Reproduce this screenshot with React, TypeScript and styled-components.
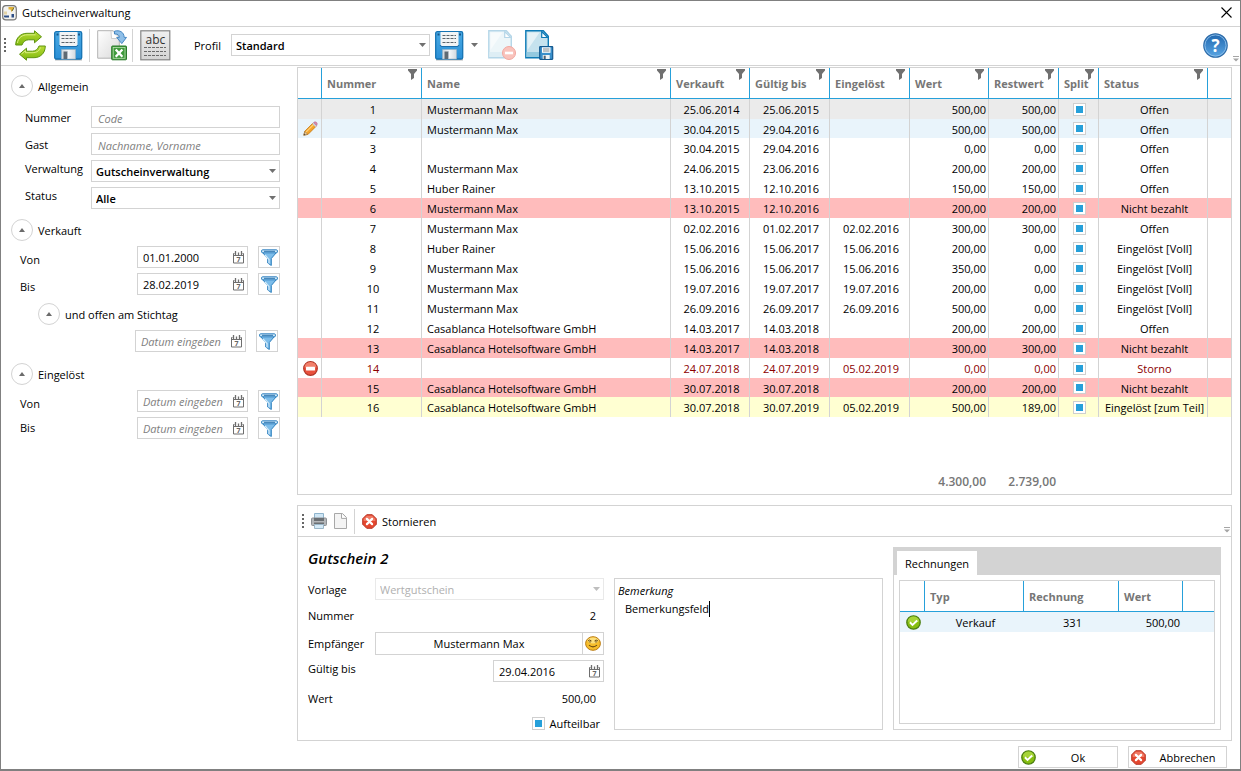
import React from 'react';
import styled, { createGlobalStyle, css } from 'styled-components';

const line = '#d3d3d3';
const accent = '#26a0da';
const muted = '#767676';

const GlobalStyle = createGlobalStyle`
  *, *::before, *::after { box-sizing: border-box; }
  body { margin: 0; background: #fff; }
  body, button, input, select, textarea {
    font-family: "Open Sans", "Noto Sans", sans-serif;
    font-size: 11px;
    line-height: 16px;
    color: #000;
  }
  button, input, select, textarea { margin: 0; border-radius: 0; }
  svg { display: block; flex: none; }
`;

/* ---------- window ---------- */

const Window = styled.div`
  min-height: 100vh;
  display: flex;
  flex-direction: column;
  border: 1px solid #808080;
  border-bottom-width: 2px;
  background: #fff;
`;

const TitleBar = styled.header`
  display: flex;
  align-items: center;
  gap: 5px;
  height: 26px;
  padding: 0 8px 2px 1px;
  border-bottom: 1px solid ${line};
`;

const Title = styled.h1`
  flex: 1;
  margin: 0;
  font-size: 11px;
  font-weight: 400;
`;

const PlainButton = styled.button`
  display: flex;
  align-items: center;
  gap: 5px;
  padding: 0;
  border: 0;
  background: none;
  cursor: pointer;
`;

const Toolbar = styled.div`
  position: relative;
  display: flex;
  align-items: center;
  height: 39px;
  padding: 0 12px 2px 3px;
  border-bottom: 1px solid ${line};
`;

const ToolGroup = styled.div<{ $gap: number; $left?: number }>`
  display: flex;
  align-items: center;
  gap: ${(p) => p.$gap}px;
  margin-left: ${(p) => p.$left ?? 0}px;
  label { padding-top: 2px; }
`;

const Divider = styled.span<{ $height: number }>`
  width: 1px;
  height: ${(p) => p.$height}px;
  background: ${line};
`;

const Grow = styled.span`
  flex: 1;
`;

const Overflow = styled.span`
  position: absolute;
  right: 1px;
  bottom: 3px;
`;

const Content = styled.div`
  flex: 1;
  display: flex;
`;

/* ---------- form controls ---------- */

const boxed = css`
  height: 22px;
  border: 1px solid ${line};
  background: #fff;
`;

const TextInput = styled.input`
  ${boxed}
  flex: 1;
  min-width: 0;
  padding: 2px 6px 0;
  outline: none;
  &::placeholder { color: #808080; font-style: italic; opacity: 1; }
`;

const SelectBox = styled.span<{ $width?: number; $faded?: boolean }>`
  position: relative;
  display: flex;
  flex: ${(p) => (p.$width ? `0 0 ${p.$width}px` : '1')};
  min-width: 0;
  svg { position: absolute; right: 4px; top: 9px; pointer-events: none; }
  select {
    ${boxed}
    width: 100%;
    padding: 2px 16px 0 4px;
    appearance: none;
    font-weight: 600;
    color: #000;
    opacity: 1;
  }
  ${(p) => p.$faded && css`
    select { border-color: #e9e9e9; color: #b0b0b0; font-weight: 400; }
    svg { opacity: 0.45; }
  `}
`;

const DateBox = styled.span`
  ${boxed}
  display: flex;
  align-items: center;
  flex: none;
  width: 111px;
  padding-right: 3px;
  input {
    flex: 1;
    min-width: 0;
    padding: 1px 0 0 5px;
    border: 0;
    background: none;
    outline: none;
  }
  input::placeholder { color: #808080; font-style: italic; opacity: 1; }
`;

const FilterButton = styled.button`
  ${boxed}
  display: grid;
  place-items: center;
  flex: 0 0 22px;
  padding: 0;
`;

const CheckBox = styled.input`
  display: block;
  flex: none;
  width: 13px;
  height: 13px;
  appearance: none;
  border: 1px solid #cfcfcf;
  background: #fff;
  &:checked {
    background: linear-gradient(${accent}, ${accent}) center / 7px 7px no-repeat #fff;
  }
`;

/* ---------- sidebar ---------- */

const Sidebar = styled.aside`
  flex: 0 0 296px;
  display: flex;
  flex-direction: column;
  gap: 10px;
  padding: 9px 17px 10px 0;
`;

const Section = styled.section`
  display: flex;
  flex-direction: column;
  gap: 5px;
`;

const SectionHead = styled.div<{ $indent: number; $before?: number; $after?: number }>`
  display: flex;
  align-items: center;
  gap: 5px;
  margin: ${(p) => p.$before ?? 0}px 0 ${(p) => p.$after ?? 0}px;
  padding-left: ${(p) => p.$indent}px;
`;

const SectionTitle = styled.h2`
  margin: 0;
  padding-top: 2px;
  font-size: 11px;
  font-weight: 400;
`;

const Collapse = styled.button`
  display: grid;
  place-items: center;
  width: 22px;
  height: 22px;
  padding: 0;
  border: 1px solid ${line};
  border-radius: 50%;
  background: #fff;
`;

type Align = 'flex-start' | 'center' | 'flex-end';

const Field = styled.div<{ $align: Align }>`
  display: flex;
  padding-left: 24px;
  label {
    flex: 0 0 66px;
    align-self: ${(p) => p.$align};
    padding-top: ${(p) => (p.$align === 'center' ? 2 : 1)}px;
  }
`;

const DateField = styled.div<{ $align?: Align; $inset?: boolean }>`
  display: flex;
  justify-content: flex-end;
  gap: 10px;
  padding: 0 ${(p) => (p.$inset ? 2 : 0)}px ${(p) => (p.$inset ? 1 : 0)}px 19px;
  label {
    flex: 1;
    align-self: ${(p) => p.$align ?? 'center'};
  }
`;

/* ---------- data tables ---------- */

const Main = styled.main`
  flex: 1;
  min-width: 0;
  display: flex;
  flex-direction: column;
  gap: 10px;
  padding: 1px 8px 0 0;
`;

const Panel = styled.section<{ $grow?: boolean }>`
  flex: ${(p) => (p.$grow ? '1 0 auto' : 'none')};
  border: 1px solid ${line};
`;

const DataTable = styled.table<{ $ruled?: boolean }>`
  width: 100%;
  table-layout: fixed;
  border-collapse: separate;
  border-spacing: 0;
  th {
    position: relative;
    height: 31px;
    padding: 2px 0 0 5px;
    border-bottom: 1px solid ${accent};
    text-align: left;
    font-weight: 700;
    color: ${muted};
    white-space: nowrap;
  }
  th + th { border-left: 1px solid ${accent}; }
  td {
    height: 20px;
    padding: 1px 0 0;
    line-height: 17px;
    white-space: nowrap;
    border-left: 1px solid ${(p) => (p.$ruled ? line : 'transparent')};
  }
  td:first-child { border-left: 0; }
  tbody tr:nth-child(13n + 2) td { height: ${(p) => (p.$ruled ? 19 : 20)}px; }
  tfoot td {
    height: 77px;
    padding-bottom: 4px;
    vertical-align: bottom;
    border: 0;
    font-size: 12px;
    font-weight: 600;
    color: ${muted};
  }
`;

const tones = {
  plain: 'transparent',
  current: '#ebebeb',
  edit: '#e9f4fb',
  unpaid: '#ffbcbc',
  partial: '#ffffd2',
  storno: 'transparent',
};
type Tone = keyof typeof tones;

const Row = styled.tr<{ $tone: Tone }>`
  background: ${(p) => tones[p.$tone]};
  td { color: ${(p) => (p.$tone === 'storno' ? '#8b0000' : '#000')}; }
`;

const Cell = styled.td<{ $kind?: 'text' | 'mid' | 'num' | 'icon' }>`
  ${(p) => p.$kind === 'text' && css`&&& { padding-left: 5px; }`}
  ${(p) => p.$kind === 'mid' && css`&&& { padding-left: 3px; text-align: center; }`}
  ${(p) => p.$kind === 'num' && css`&&& { padding-right: 2px; text-align: right; }`}
  ${(p) => p.$kind === 'icon' && css`
    &&& { padding: 0 0 0 2px; }
    svg, input { margin: 0 auto; }
  `}
`;

const HeadFilter = styled.button`
  position: absolute;
  top: 1px;
  right: 4px;
  padding: 0;
  border: 0;
  background: none;
`;

/* ---------- voucher details ---------- */

const DetailBar = styled.div`
  position: relative;
  display: flex;
  align-items: center;
  height: 31px;
  padding-left: 4px;
  border-bottom: 1px solid ${line};
`;

const BarText = styled.span`
  padding-top: 2px;
`;

const DetailBody = styled.div`
  display: grid;
  grid-template-columns: 296px minmax(0, 1fr) 328px;
  grid-template-rows: 31px 152px;
  column-gap: 10px;
  padding: 10px;
`;

const DetailTitle = styled.h2`
  grid-column: 1 / 3;
  margin: 0;
  font-size: 15px;
  line-height: 22px;
  font-weight: 600;
  font-style: italic;
  color: #000;
`;

const Form = styled.form`
  display: flex;
  flex-direction: column;
`;

const FormRow = styled.div<{ $height: number; $align?: Align; $after?: number }>`
  display: flex;
  align-items: ${(p) => p.$align ?? 'center'};
  justify-content: space-between;
  height: ${(p) => p.$height}px;
  margin-bottom: ${(p) => p.$after ?? 0}px;
  label { flex: 0 0 67px; padding-top: 1px; }
  output { padding-right: 8px; }
`;

const Recipient = styled.span`
  display: flex;
  flex: 1;
  height: 23px;
  border: 1px solid ${line};
  input {
    flex: 1;
    min-width: 0;
    border: 0;
    padding: 1px 0 0;
    text-align: center;
    background: none;
  }
  button {
    display: grid;
    place-items: center;
    width: 21px;
    padding: 0;
    border: 0;
    border-left: 1px solid ${line};
    background: none;
  }
`;

const CheckLabel = styled.div`
  display: flex;
  align-items: center;
  gap: 5px;
  margin-left: auto;
  padding-right: 4px;
  label { flex: none; }
`;

const Notes = styled.div`
  display: flex;
  flex-direction: column;
  align-items: flex-start;
  padding: 3px;
  border: 1px solid ${line};
  label { font-style: italic; line-height: 18px; }
  textarea {
    field-sizing: content;
    max-width: 100%;
    margin: 1px 0 0 7px;
    padding: 0;
    border: 0;
    border-right: 1px solid #000;
    outline: none;
    resize: none;
    overflow: hidden;
    background: none;
  }
`;

const Tabs = styled.div`
  grid-column: 3;
  grid-row: 1 / 3;
  display: flex;
  flex-direction: column;
  border: 1px solid ${line};
`;

const TabList = styled.div`
  display: flex;
  align-items: flex-end;
  height: 27px;
  padding-left: 3px;
  background: ${line};
`;

const Tab = styled.button`
  height: 24px;
  padding: 2px 8px 0;
  border: 0;
  background: #fff;
`;

const TabPage = styled.div`
  flex: 1;
  margin: 5px;
  border: 1px solid ${line};
`;

const Footer = styled.footer`
  display: flex;
  justify-content: flex-end;
  gap: 10px;
  padding: 5px 13px 1px 0;
`;

const FooterButton = styled.button<{ $width: number }>`
  ${boxed}
  display: flex;
  align-items: center;
  width: ${(p) => p.$width}px;
  padding: 0 2px;
  span { flex: 1; padding: 2px 0 0 5px; text-align: center; }
`;

/* ---------- icons ---------- */

const Grip = () => (
  <svg width="3" height="15" viewBox="0 0 3 15">
    {[0, 4, 8, 12].map((y) => <rect key={y} x="0" y={y} width="2" height="2" fill="#666" />)}
  </svg>
);

const Arrow = () => (
  <svg width="7" height="4" viewBox="0 0 7 4"><path d="M0 0h7L3.5 4z" fill="#707070" /></svg>
);

const UpArrow = () => (
  <svg width="6" height="4" viewBox="0 0 6 4"><path d="M0 4h6L3 0z" fill="#6b6b6b" /></svg>
);

const OverflowIcon = () => (
  <svg width="6" height="6" viewBox="0 0 6 6"><path d="M0 0h6v1H0zM0 2.5h6L3 5.5z" fill="#a5a5a5" /></svg>
);

const AppIcon = () => (
  <svg width="15" height="16" viewBox="0 0 15 16">
    <rect x=".7" y=".7" width="13.6" height="14.2" rx="3.2" fill="#f3f3f0" stroke="#777" strokeWidth="1.2" />
    <path d="M6.500 2h5.500l-.5 2.500-2 2.500-1-2.500h-2z" fill="#e0b23a" />
    <path d="M10 6l2-3.500" stroke="#6b6f3a" strokeWidth="1" />
    <path d="M2 6.500h3v3H2z" fill="#e3d3a6" />
    <path d="M2 10.500h5v2H3q-1 0-1-1zM9.500 9h2.500v3.500H9.500z" fill="#2e4f86" />
  </svg>
);

const CloseIcon = () => (
  <svg width="11" height="11" viewBox="0 0 11 11"><path d="M.5.5l10 10M10.500.5l-10 10" stroke="#000" strokeWidth="1.1" /></svg>
);

const RefreshIcon = () => (
  <svg width="31" height="31" viewBox="0 0 31 31">
    <defs>
      <linearGradient id="leaf" x1="0" y1="0" x2="0" y2="1">
        <stop offset="0" stopColor="#b9dc36" /><stop offset="1" stopColor="#7fb80e" />
      </linearGradient>
    </defs>
    <g fill="url(#leaf)" stroke="#5f9410" strokeWidth="1" strokeLinejoin="round">
      <path d="M.7 15C.7 7.500 6 3.300 12 3.300h7.500V.8l7 6-7 6v-3h-6c-3.200 0-5.500 2.200-6.500 5.200z" />
      <path d="M30.300 16c0 7.500-5.300 11.700-11.300 11.700h-7.500v2.500l-7-6 7-6v3h6c3.200 0 5.500-2.200 6.500-5.200z" />
    </g>
    <path d="M2.500 13C3 7.500 8 4.800 12 4.800h8.500" fill="none" stroke="#d8ee80" strokeWidth="1" />
    <path d="M6.500 24l4-3.400v2.100h7.500c4 0 6.500-2 7.500-5.200" fill="none" stroke="#d8ee80" strokeWidth="1" />
  </svg>
);

const SaveIcon = () => (
  <svg width="29" height="31" viewBox="0 0 29 31">
    <defs>
      <linearGradient id="disk" x1="0" y1="0" x2="0" y2="1">
        <stop offset="0" stopColor="#4aaae4" /><stop offset="1" stopColor="#2a8fd6" />
      </linearGradient>
      <linearGradient id="metal" x1="0" y1="0" x2="1" y2="0">
        <stop offset="0" stopColor="#cfd6dc" /><stop offset=".5" stopColor="#f4f6f8" /><stop offset="1" stopColor="#d2d9df" />
      </linearGradient>
    </defs>
    <rect x="1" y="29" width="27" height="1.500" fill="#b9b9b9" />
    <rect x=".7" y="1.700" width="27" height="27.300" rx="1.500" fill="url(#disk)" stroke="#1573b3" strokeWidth="1.300" />
    <path d="M2.500 3.500h2v2h-2zM24 3.500h2v2h-2z" fill="#17568a" />
    <path d="M5.500 2h18v12.500q0 1.500-1.500 1.500H7q-1.500 0-1.500-1.500z" fill="#f2f4f5" />
    <path d="M5 15q.5 1.500 2 1.500h15q1.500 0 2-1.500" fill="none" stroke="#1a6daa" />
    <path d="M7.500 5.500H21M7.500 8.500H21M7.500 12.500H21" stroke="#5b646b" strokeWidth="1" strokeDasharray="3 1" />
    <path d="M7.500 19.500h14v9.500h-14z" fill="url(#metal)" stroke="#9eb3c2" strokeWidth=".6" />
    <rect x="9.500" y="21.500" width="4" height="7.500" fill="#5f6a73" />
    <path d="M13.500 21.500v7.500" stroke="#b4bcc4" />
  </svg>
);

const ExcelIcon = () => (
  <svg width="31" height="31" viewBox="0 0 31 31">
    <defs>
      <linearGradient id="sheet" x1="0" y1="0" x2="1" y2="1">
        <stop offset="0" stopColor="#ffffff" /><stop offset="1" stopColor="#dadada" />
      </linearGradient>
    </defs>
    <path d="M.7.7H16l6.300 6v21.500H.7z" fill="url(#sheet)" stroke="#b3b3b3" />
    <path d="M14 1l.5 7.500h7.500" fill="#fff" stroke="#c3c3c3" strokeWidth=".8" />
    <path d="M17.500 1.200c5-1.500 9.500.8 9.700 6.200H29.500l-4.700 6.200-5.100-6.200h2.600c0-2.500-1.800-3.600-4.800-3.400z" fill="#8fbfe8" stroke="#3a7fbd" strokeWidth=".9" strokeLinejoin="round" />
    <rect x="14.700" y="16" width="14.800" height="13.800" rx=".8" fill="#3f9a3c" stroke="#2a7a2b" />
    <rect x="16.200" y="17.500" width="11.800" height="10.800" fill="none" stroke="#b9dfae" strokeWidth=".8" />
    <path d="M18.700 19.500l6.700 7.200M25.400 19.500l-6.700 7.200" stroke="#fff" strokeWidth="2.300" />
  </svg>
);

const AbcIcon = () => (
  <svg width="31" height="31" viewBox="0 0 31 31">
    <defs>
      <linearGradient id="card" x1="0" y1="0" x2="0" y2="1">
        <stop offset="0" stopColor="#f0f0f0" /><stop offset="1" stopColor="#d4d4d4" />
      </linearGradient>
    </defs>
    <rect x=".8" y=".8" width="29" height="29" fill="url(#card)" stroke="#858585" strokeWidth="1.200" />
    <text x="15.500" y="14" textAnchor="middle" fontSize="12" fontFamily="Open Sans, sans-serif" fill="#333">abc</text>
    <path d="M4 17.500h22M4 21.500h22M4 25.500h22" stroke="#6a6a6a" strokeDasharray="3 1" />
  </svg>
);

const PageShape = ({ faded }: { faded?: boolean }) => (
  <g opacity={faded ? 0.3 : 1}>
    <path d="M.8.8h17.500l5 5.500v21.500H.8z" fill="#c5e2ee" stroke="#0d7ab5" strokeWidth="1.400" />
    <path d="M2.500 2.500h12L2.500 20z" fill="#fff" opacity=".55" />
    <path d="M1.500 22h21v5h-21z" fill="#93c9df" />
    <path d="M16.700 1.500v6h6z" fill="#fff" stroke="#0d7ab5" strokeWidth="1.200" />
  </g>
);

const PageDeleteIcon = () => (
  <svg width="29" height="31" viewBox="0 0 29 31">
    <PageShape faded />
    <circle cx="21" cy="23" r="6.500" fill="#f9c3bc" stroke="#f2a79f" />
    <rect x="17" y="21.700" width="8" height="2.600" fill="#fff" />
  </svg>
);

const PageSaveIcon = () => (
  <svg width="29" height="31" viewBox="0 0 29 31">
    <PageShape />
    <rect x="14.700" y="16.700" width="13" height="12.600" rx=".5" fill="#3a8fca" stroke="#14598f" strokeWidth="1.200" />
    <rect x="17" y="17.300" width="8.500" height="5.500" fill="#fff" />
    <path d="M18 19h6.500M18 21h6.500" stroke="#7b868e" />
    <rect x="17.700" y="25" width="7" height="4" fill="#eef2f5" />
    <rect x="18.700" y="25.700" width="2" height="3.300" fill="#4f6070" />
  </svg>
);

const HelpIcon = () => (
  <svg width="25" height="25" viewBox="0 0 25 25">
    <defs>
      <linearGradient id="help" x1="0" y1="0" x2="0" y2="1">
        <stop offset="0" stopColor="#1f66ae" /><stop offset="1" stopColor="#5aa6e4" />
      </linearGradient>
    </defs>
    <circle cx="12.500" cy="12.500" r="11.700" fill="url(#help)" stroke="#2d6ba8" strokeWidth="1.200" />
    <circle cx="12.500" cy="12.500" r="10.600" fill="none" stroke="#8fc0ea" strokeWidth=".9" />
    <text x="12.500" y="18.500" textAnchor="middle" fontSize="17" fontWeight="700" fontFamily="Open Sans, sans-serif" fill="#fff">?</text>
  </svg>
);

const CalendarIcon = () => (
  <svg width="11" height="13" viewBox="0 0 11 13">
    <path d="M1.500 2.500H.5v9.500h10V2.500h-1" fill="none" stroke="#6e6e6e" />
    <path d="M1 4.500h9" stroke="#6e6e6e" />
    <path d="M2.500 0v4M8.500 0v4M5.500 1.500v2.500" stroke="#6e6e6e" strokeWidth="1.300" />
    <text x="5.500" y="11" textAnchor="middle" fontSize="7" fontWeight="700" fontFamily="Open Sans, sans-serif" fill="#666">7</text>
  </svg>
);

const FunnelIcon = () => (
  <svg width="17" height="17" viewBox="0 0 17 17">
    <path d="M.7 2.500l6 7v4.500l3.600 2.500v-7l6-7z" fill="#7dbdea" stroke="#2f81bf" strokeWidth="1" strokeLinejoin="round" />
    <path d="M4 6l4 4.500v4" fill="none" stroke="#d5ecfa" strokeWidth="1.200" />
    <rect x=".6" y=".8" width="15.800" height="3" rx="1" fill="#cfe8f8" stroke="#2f81bf" />
    <path d="M3 2.300h11" stroke="#2671ad" strokeWidth="1" />
  </svg>
);

const HeadFunnel = () => (
  <svg width="9" height="11" viewBox="0 0 9 11"><path d="M0 0h9v1.500L6 5v4l-3 2V5L0 1.500z" fill="#707070" /></svg>
);

const PencilIcon = () => (
  <svg width="15" height="15" viewBox="0 0 15 15">
    <path d="M.8 14.200l1-4 8-8 3.200 3.200-8 8z" fill="#f5a32a" stroke="#c47a18" strokeWidth=".8" />
    <path d="M3 11.200l7.500-7.500" stroke="#ffd27a" strokeWidth="1.200" />
    <path d="M.8 14.200l1-3.800 2.900 2.900z" fill="#e8cba0" stroke="#8a6a3a" strokeWidth=".5" />
    <path d="M.7 14.300l.6-1.800 1.200 1.200z" fill="#444" />
    <path d="M9.300 2.700l1.200-1.200 3.200 3.200-1.200 1.200z" fill="#c8cfdc" />
    <path d="M10.500 1.500Q12 0 13.500 1.300T13.700 4.700z" fill="#d987a8" stroke="#a9688e" strokeWidth=".5" />
  </svg>
);

const StopIcon = () => (
  <svg width="15" height="15" viewBox="0 0 15 15">
    <circle cx="7.500" cy="7.500" r="6.800" fill="#e9503c" stroke="#b03324" strokeWidth="1.200" />
    <path d="M1.500 6.500a6 5.500 0 0 1 12 0z" fill="#f2806b" />
    <rect x="3" y="5.700" width="9" height="3.800" rx=".6" fill="#fff" />
  </svg>
);

const CheckIcon = () => (
  <svg width="15" height="15" viewBox="0 0 15 15">
    <circle cx="7.500" cy="7.500" r="6.700" fill="#86be10" stroke="#4c7f12" strokeWidth="1.300" />
    <path d="M1.700 6.500a5.800 5 0 0 1 11.600 0q-5.800 2-11.600 0z" fill="#a6d437" />
    <path d="M3.900 7.300l2.600 2.600 4.700-4.300" fill="none" stroke="#fff" strokeWidth="2" />
  </svg>
);

const CancelIcon = () => (
  <svg width="15" height="15" viewBox="0 0 15 15">
    <path d="M4.700.7h5.600l4 4v5.600l-4 4H4.700l-4-4V4.700z" fill="#e4472f" stroke="#b8392a" />
    <path d="M5 1.700h5l3.300 3.300v2H1.700V5z" fill="#f07a64" />
    <path d="M4.900 4.900l5.200 5.200M10.100 4.900l-5.200 5.200" stroke="#fff" strokeWidth="2.200" strokeLinecap="round" />
  </svg>
);

const PrinterIcon = () => (
  <svg width="16" height="16" viewBox="0 0 16 16">
    <path d="M3.500.5h9v6h-9z" fill="#cfe6f5" stroke="#8fb4cc" />
    <rect x=".5" y="5" width="15" height="7.500" rx="1" fill="#b4b7ba" stroke="#8c9094" />
    <path d="M3 5h10v3H3zM3 9.500h10v1.500H3z" fill="#6b7074" />
    <path d="M3.500 11.500h9v4h-9z" fill="#d5eaf7" stroke="#9ab6c8" />
  </svg>
);

const PageIcon = () => (
  <svg width="13" height="16" viewBox="0 0 13 16">
    <path d="M.5.5h8l4 4v11H.5z" fill="#f4f4f4" stroke="#a8a8a8" />
    <path d="M7.500.8v4.600h4.600" fill="#fff" stroke="#a8a8a8" />
  </svg>
);

const FaceIcon = () => (
  <svg width="16" height="15" viewBox="0 0 16 15">
    <ellipse cx="8" cy="7.500" rx="7.400" ry="6.800" fill="#f6bd2b" stroke="#b9790f" />
    <ellipse cx="8" cy="4.500" rx="5.500" ry="3" fill="#fde07c" />
    <path d="M3 5q1.500-2 3.500 0M9.500 5q1.500-2 3.500 0" fill="none" stroke="#6b4a10" />
    <path d="M5 5.200v1.300M11 5.200v1.300" stroke="#4a320a" strokeWidth="1.200" />
    <path d="M4 9.200q4 3.300 8 0" fill="none" stroke="#6b4a10" strokeWidth="1.100" />
  </svg>
);

/* ---------- data ---------- */

interface Voucher {
  nr: number; name: string; sold: string; until: string; used: string;
  value: string; rest: string; status: string; tone: Tone;
}

const v = (nr: number, name: string, sold: string, until: string, used: string,
  value: string, rest: string, status: string, tone: Tone = 'plain'): Voucher =>
  ({ nr, name, sold, until, used, value, rest, status, tone });

const MM = 'Mustermann Max';
const HR = 'Huber Rainer';
const CH = 'Casablanca Hotelsoftware GmbH';

const vouchers: Voucher[] = [
  v(1, MM, '25.06.2014', '25.06.2015', '', '500,00', '500,00', 'Offen', 'current'),
  v(2, MM, '30.04.2015', '29.04.2016', '', '500,00', '500,00', 'Offen', 'edit'),
  v(3, '', '30.04.2015', '29.04.2016', '', '0,00', '0,00', 'Offen'),
  v(4, MM, '24.06.2015', '23.06.2016', '', '200,00', '200,00', 'Offen'),
  v(5, HR, '13.10.2015', '12.10.2016', '', '150,00', '150,00', 'Offen'),
  v(6, MM, '13.10.2015', '12.10.2016', '', '200,00', '200,00', 'Nicht bezahlt', 'unpaid'),
  v(7, MM, '02.02.2016', '01.02.2017', '02.02.2016', '300,00', '300,00', 'Offen'),
  v(8, HR, '15.06.2016', '15.06.2017', '15.06.2016', '200,00', '0,00', 'Eingelöst [Voll]'),
  v(9, MM, '15.06.2016', '15.06.2017', '15.06.2016', '350,00', '0,00', 'Eingelöst [Voll]'),
  v(10, MM, '19.07.2016', '19.07.2017', '19.07.2016', '200,00', '0,00', 'Eingelöst [Voll]'),
  v(11, MM, '26.09.2016', '26.09.2017', '26.09.2016', '500,00', '0,00', 'Eingelöst [Voll]'),
  v(12, CH, '14.03.2017', '14.03.2018', '', '200,00', '200,00', 'Offen'),
  v(13, CH, '14.03.2017', '14.03.2018', '', '300,00', '300,00', 'Nicht bezahlt', 'unpaid'),
  v(14, '', '24.07.2018', '24.07.2019', '05.02.2019', '0,00', '0,00', 'Storno', 'storno'),
  v(15, CH, '30.07.2018', '30.07.2018', '', '200,00', '200,00', 'Nicht bezahlt', 'unpaid'),
  v(16, CH, '30.07.2018', '30.07.2019', '05.02.2019', '500,00', '189,00', 'Eingelöst [zum Teil]', 'partial'),
];

const columns: { title: string; width?: number }[] = [
  { title: 'Nummer', width: 100 },
  { title: 'Name' },
  { title: 'Verkauft', width: 79 },
  { title: 'Gültig bis', width: 80 },
  { title: 'Eingelöst', width: 80 },
  { title: 'Wert', width: 79 },
  { title: 'Restwert', width: 70 },
  { title: 'Split', width: 40 },
  { title: 'Status', width: 109 },
];

/* ---------- composed parts ---------- */

const Dropdown = ({ id, value, width, faded }: { id: string; value: string; width?: number; faded?: boolean }) => (
  <SelectBox $width={width} $faded={faded}>
    <select id={id} defaultValue={value} disabled={faded}><option>{value}</option></select>
    <Arrow />
  </SelectBox>
);

const DateInput = ({ id, value, label }: { id: string; value?: string; label?: string }) => (
  <DateBox>
    <input id={id} type="text" defaultValue={value} placeholder="Datum eingeben" aria-label={label} />
    <PlainButton type="button" aria-label="Kalender"><CalendarIcon /></PlainButton>
  </DateBox>
);

const DateFilter = ({ id, label, value, align, inset }:
  { id: string; label?: string; value?: string; align?: Align; inset?: boolean }) => (
  <DateField $align={align} $inset={inset}>
    {label && <label htmlFor={id}>{label}</label>}
    <DateInput id={id} value={value} label={label ? undefined : 'Stichtag'} />
    <FilterButton type="button" aria-label="Filter"><FunnelIcon /></FilterButton>
  </DateField>
);

const Heading = ({ title, indent = 10, before, after }:
  { title: string; indent?: number; before?: number; after?: number }) => (
  <SectionHead $indent={indent} $before={before} $after={after}>
    <Collapse type="button" aria-label={title}><UpArrow /></Collapse>
    <SectionTitle>{title}</SectionTitle>
  </SectionHead>
);

const FilterPanel = () => (
  <Sidebar>
    <Section>
      <Heading title="Allgemein" after={4} />
      <Field $align="center">
        <label htmlFor="f-nr">Nummer</label>
        <TextInput id="f-nr" placeholder="Code" />
      </Field>
      <Field $align="center">
        <label htmlFor="f-guest">Gast</label>
        <TextInput id="f-guest" placeholder="Nachname, Vorname" />
      </Field>
      <Field $align="flex-start">
        <label htmlFor="f-admin">Verwaltung</label>
        <Dropdown id="f-admin" value="Gutscheinverwaltung" />
      </Field>
      <Field $align="flex-start">
        <label htmlFor="f-status">Status</label>
        <Dropdown id="f-status" value="Alle" />
      </Field>
    </Section>
    <Section>
      <Heading title="Verkauft" />
      <DateFilter id="s-from" label="Von" value="01.01.2000" align="flex-end" />
      <DateFilter id="s-to" label="Bis" value="28.02.2019" align="flex-end" />
      <Heading title="und offen am Stichtag" indent={37} before={3} />
      <DateFilter id="s-open" inset />
    </Section>
    <Section>
      <Heading title="Eingelöst" />
      <DateFilter id="u-from" label="Von" align="flex-end" />
      <DateFilter id="u-to" label="Bis" />
    </Section>
  </Sidebar>
);

const VoucherTable = () => (
  <Panel $grow>
    <DataTable $ruled>
      <colgroup>
        <col width={23} />
        {columns.map((c) => <col key={c.title} width={c.width} />)}
        <col width={24} />
      </colgroup>
      <thead>
        <tr>
          <th />
          {columns.map((c) => (
            <th key={c.title}>
              {c.title}
              <HeadFilter type="button" aria-label={`${c.title} filtern`}><HeadFunnel /></HeadFilter>
            </th>
          ))}
          <th />
        </tr>
      </thead>
      <tbody>
        {vouchers.map((r) => (
          <Row key={r.nr} $tone={r.tone}>
            <Cell $kind="icon">
              {r.tone === 'edit' && <PencilIcon />}
              {r.tone === 'storno' && <StopIcon />}
            </Cell>
            <Cell $kind="mid">{r.nr}</Cell>
            <Cell $kind="text">{r.name}</Cell>
            <Cell $kind="mid">{r.sold}</Cell>
            <Cell $kind="mid">{r.until}</Cell>
            <Cell $kind="mid">{r.used}</Cell>
            <Cell $kind="num">{r.value}</Cell>
            <Cell $kind="num">{r.rest}</Cell>
            <Cell $kind="icon"><CheckBox type="checkbox" defaultChecked aria-label={`Split ${r.nr}`} /></Cell>
            <Cell $kind="mid">{r.status}</Cell>
            <Cell />
          </Row>
        ))}
      </tbody>
      <tfoot>
        <tr>
          <td colSpan={6} />
          <Cell $kind="num">4.300,00</Cell>
          <Cell $kind="num">2.739,00</Cell>
          <td colSpan={3} />
        </tr>
      </tfoot>
    </DataTable>
  </Panel>
);

const Invoices = () => (
  <Tabs>
    <TabList role="tablist"><Tab type="button" role="tab" aria-selected="true">Rechnungen</Tab></TabList>
    <TabPage role="tabpanel">
      <DataTable>
        <colgroup>
          <col width={24} /><col width={99} /><col width={95} /><col width={64} /><col />
        </colgroup>
        <thead>
          <tr><th /><th>Typ</th><th>Rechnung</th><th>Wert</th><th /></tr>
        </thead>
        <tbody>
          <Row $tone="edit">
            <Cell $kind="icon"><CheckIcon /></Cell>
            <Cell $kind="mid">Verkauf</Cell>
            <Cell $kind="mid">331</Cell>
            <Cell $kind="num">500,00</Cell>
            <Cell />
          </Row>
        </tbody>
      </DataTable>
    </TabPage>
  </Tabs>
);

const VoucherDetails = () => (
  <Panel>
    <DetailBar>
      <Grip />
      <ToolGroup $gap={7} $left={6}>
        <PlainButton type="button" aria-label="Drucken"><PrinterIcon /></PlainButton>
        <PlainButton type="button" aria-label="Neu"><PageIcon /></PlainButton>
        <Divider $height={25} />
        <PlainButton type="button"><CancelIcon /><BarText>Stornieren</BarText></PlainButton>
      </ToolGroup>
      <Overflow><OverflowIcon /></Overflow>
    </DetailBar>
    <DetailBody>
      <DetailTitle>Gutschein 2</DetailTitle>
      <Form>
        <FormRow $height={22}>
          <label htmlFor="d-tpl">Vorlage</label>
          <Dropdown id="d-tpl" value="Wertgutschein" faded />
        </FormRow>
        <FormRow $height={32}>
          <span>Nummer</span>
          <output>2</output>
        </FormRow>
        <FormRow $height={23} $after={5}>
          <label htmlFor="d-rec">Empfänger</label>
          <Recipient>
            <input id="d-rec" defaultValue={MM} />
            <button type="button" aria-label="Gast wählen"><FaceIcon /></button>
          </Recipient>
        </FormRow>
        <FormRow $height={22} $align="flex-start">
          <label htmlFor="d-until">Gültig bis</label>
          <DateInput id="d-until" value="29.04.2016" />
        </FormRow>
        <FormRow $height={34}>
          <span>Wert</span>
          <output>500,00</output>
        </FormRow>
        <FormRow $height={14}>
          <CheckLabel>
            <CheckBox type="checkbox" id="d-split" defaultChecked />
            <label htmlFor="d-split">Aufteilbar</label>
          </CheckLabel>
        </FormRow>
      </Form>
      <Notes>
        <label htmlFor="d-note">Bemerkung</label>
        <textarea id="d-note" rows={1} defaultValue="Bemerkungsfeld" />
      </Notes>
      <Invoices />
    </DetailBody>
  </Panel>
);

export default function App() {
  return (
    <Window>
      <GlobalStyle />
      <TitleBar>
        <AppIcon />
        <Title>Gutscheinverwaltung</Title>
        <PlainButton type="button" aria-label="Schließen"><CloseIcon /></PlainButton>
      </TitleBar>
      <Toolbar>
        <Grip />
        <ToolGroup $gap={8} $left={8}>
          <PlainButton type="button" aria-label="Aktualisieren"><RefreshIcon /></PlainButton>
          <PlainButton type="button" aria-label="Speichern"><SaveIcon /></PlainButton>
        </ToolGroup>
        <ToolGroup $gap={7} $left={6}>
          <Divider $height={33} />
          <PlainButton type="button" aria-label="Excel-Export"><ExcelIcon /></PlainButton>
        </ToolGroup>
        <ToolGroup $gap={7} $left={4}>
          <Divider $height={33} />
          <PlainButton type="button" aria-label="Text"><AbcIcon /></PlainButton>
        </ToolGroup>
        <ToolGroup $gap={10} $left={23}>
          <label htmlFor="profile">Profil</label>
          <Dropdown id="profile" value="Standard" width={199} />
        </ToolGroup>
        <ToolGroup $gap={7} $left={5}>
          <PlainButton type="button" aria-label="Profil speichern"><SaveIcon /></PlainButton>
          <PlainButton type="button" aria-label="Mehr"><Arrow /></PlainButton>
        </ToolGroup>
        <ToolGroup $gap={8} $left={10}>
          <PlainButton type="button" aria-label="Profil löschen"><PageDeleteIcon /></PlainButton>
          <PlainButton type="button" aria-label="Profil speichern unter"><PageSaveIcon /></PlainButton>
        </ToolGroup>
        <Grow />
        <PlainButton type="button" aria-label="Hilfe"><HelpIcon /></PlainButton>
        <Overflow><OverflowIcon /></Overflow>
      </Toolbar>
      <Content>
        <FilterPanel />
        <Main>
          <VoucherTable />
          <VoucherDetails />
        </Main>
      </Content>
      <Footer>
        <FooterButton type="button" $width={100}><CheckIcon /><span>Ok</span></FooterButton>
        <FooterButton type="button" $width={99}><CancelIcon /><span>Abbrechen</span></FooterButton>
      </Footer>
    </Window>
  );
}
